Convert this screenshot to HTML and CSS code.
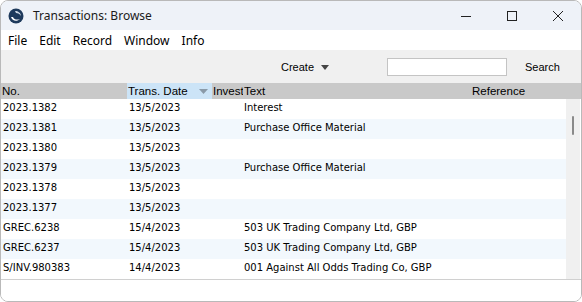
FILE: index.html
```html
<!DOCTYPE html>
<html>
<head>
<meta charset="utf-8">
<link rel="stylesheet" href="styles.css">
</head>
<body>
<div class="window">
  <div class="titlebar">
    <svg class="appicon" width="16" height="16" viewBox="0 0 16 16">
      <circle cx="8" cy="8" r="7.5" fill="#1e3a5c"/>
      <path d="M3 9 C4 13 9 14 12 11 C10 12 6 12 5 9 Z" fill="#fff"/>
      <path d="M7 3 C10 3 13 5 13 8 C12 6 10 5 8 5 Z" fill="#cfd9e4"/>
    </svg>
    <span class="title">Transactions: Browse</span>
    <div class="controls">
      <span class="ctl"><svg width="10" height="10" viewBox="0 0 10 10"><path d="M0 5.5h10" stroke="#222" stroke-width="1"/></svg></span>
      <span class="ctl"><svg width="10" height="10" viewBox="0 0 10 10"><rect x="0.5" y="0.5" width="9" height="9" fill="none" stroke="#222" stroke-width="1"/></svg></span>
      <span class="ctl"><svg width="10" height="10" viewBox="0 0 10 10"><path d="M0 0L10 10M10 0L0 10" stroke="#222" stroke-width="1"/></svg></span>
    </div>
  </div>
  <div class="menubar">
    <span>File</span><span>Edit</span><span>Record</span><span>Window</span><span>Info</span>
  </div>
  <div class="toolbar">
    <span class="create">Create <svg width="8" height="5" viewBox="0 0 8 5"><path d="M0 0h8L4 5z" fill="#444"/></svg></span>
    <input class="search" type="text">
    <span class="searchbtn">Search</span>
  </div>
  <div class="tablewrap">
    <div class="header">
      <span class="c1">No.</span>
      <span class="c2 sorted">Trans. Date<svg class="sortarrow" width="9" height="5" viewBox="0 0 9 5"><path d="M0 0h9L4.5 5z" fill="#8a9aa8"/></svg></span>
      <span class="c3">Invest</span>
      <span class="c4">Text</span>
      <span class="c5">Reference</span>
    </div>
    <div class="body">
      <div class="rows">
        <div class="row"><span class="c1">2023.1382</span><span class="c2">13/5/2023</span><span class="c3"></span><span class="c4">Interest</span></div>
        <div class="row"><span class="c1">2023.1381</span><span class="c2">13/5/2023</span><span class="c3"></span><span class="c4">Purchase Office Material</span></div>
        <div class="row"><span class="c1">2023.1380</span><span class="c2">13/5/2023</span><span class="c3"></span><span class="c4"></span></div>
        <div class="row"><span class="c1">2023.1379</span><span class="c2">13/5/2023</span><span class="c3"></span><span class="c4">Purchase Office Material</span></div>
        <div class="row"><span class="c1">2023.1378</span><span class="c2">13/5/2023</span><span class="c3"></span><span class="c4"></span></div>
        <div class="row"><span class="c1">2023.1377</span><span class="c2">13/5/2023</span><span class="c3"></span><span class="c4"></span></div>
        <div class="row"><span class="c1">GREC.6238</span><span class="c2">15/4/2023</span><span class="c3"></span><span class="c4">503 UK Trading Company Ltd, GBP</span></div>
        <div class="row"><span class="c1">GREC.6237</span><span class="c2">15/4/2023</span><span class="c3"></span><span class="c4">503 UK Trading Company Ltd, GBP</span></div>
        <div class="row"><span class="c1">S/INV.980383</span><span class="c2">14/4/2023</span><span class="c3"></span><span class="c4">001 Against All Odds Trading Co, GBP</span></div>
      </div>
      <div class="scrollbar"><div class="thumb"></div></div>
    </div>
  </div>
  <div class="footer"></div>
</div>
</body>
</html>
```
FILE: styles.css
```css
html, body {
  margin: 0;
  padding: 0;
  background: #ffffff;
}
.window {
  width: 582px;
  height: 302px;
  box-sizing: border-box;
  border: 1px solid #b9b9b9;
  border-radius: 8px;
  overflow: hidden;
  display: flex;
  flex-direction: column;
  background: #fff;
  font-family: "Noto Sans", sans-serif;
}
.titlebar {
  height: 29px;
  flex: none;
  background: #eef2f8;
  display: flex;
  align-items: center;
  padding-left: 7px;
}
.appicon { flex: none; }
.title {
  margin-left: 9px;
  font-size: 12px;
  color: #1a1a1a;
  font-family: "Noto Sans", sans-serif;
}
.controls {
  margin-left: auto;
  display: flex;
  height: 100%;
}
.ctl {
  width: 46px;
  display: flex;
  align-items: center;
  justify-content: center;
}
.menubar {
  height: 20px;
  flex: none;
  display: flex;
  align-items: center;
  padding-left: 7px;
  font-family: "Noto Sans", sans-serif;
  font-size: 12px;
  color: #000;
  background: #fff;
}
.menubar span { margin-right: 12px; }
.toolbar {
  height: 33px;
  flex: none;
  background: #f0f0f0;
  display: flex;
  align-items: center;
  font-family: "Liberation Sans", sans-serif;
  font-size: 11px;
  color: #000;
  padding-top: 1px;
  box-sizing: border-box;
}
.create {
  margin-left: 280px;
  width: 60px;
  display: flex;
  align-items: center;
  gap: 7px;
}
.search {
  margin-left: 46px;
  width: 120px;
  height: 18px;
  box-sizing: border-box;
  border: 1px solid #c4c4c4;
  background: #fff;
  padding: 0;
}
.searchbtn { margin-left: 18px; }
.tablewrap {
  flex: none;
  display: flex;
  flex-direction: column;
  font-family: "DejaVu Sans", sans-serif;
  font-size: 10px;
  color: #000;
  border-bottom: 1px solid #d0d0d0;
}
.header {
  height: 16px;
  background: #c9c9c9;
  display: flex;
  align-items: center;
  font-family: "Liberation Sans", sans-serif;
  font-size: 11.5px;
}
.header span { height: 100%; display: flex; align-items: center; box-sizing: border-box; }
.c1 { width: 126px; padding-left: 1px; flex: none; box-sizing: border-box; }
.c2 { width: 85px; padding-left: 1px; flex: none; box-sizing: border-box; }
.c3 { width: 31px; padding-left: 1px; flex: none; box-sizing: border-box; overflow: hidden; white-space: nowrap; }
.c4 { width: 228px; padding-left: 1px; flex: none; box-sizing: border-box; }
.c5 { flex: 1; padding-left: 1px; }
.sorted { background: #cce4f7; }
.sortarrow { margin-left: auto; margin-right: 4px; }
.body {
  display: flex;
  height: 180px;
}
.rows { flex: 1; }
.row {
  height: 20px;
  display: flex;
  align-items: center;
  white-space: nowrap;
  box-sizing: border-box;
  padding-bottom: 4px;
}
.row:nth-child(even) { background: #f2f8fd; }
.row .c1 { padding-left: 2px; }
.row .c2 { padding-left: 2px; }
.row .c4 { padding-left: 1px; }
.scrollbar {
  width: 14px;
  flex: none;
  background: #f0f0f0;
  margin-right: 1px;
  position: relative;
}
.thumb {
  position: absolute;
  left: 6px;
  top: 17px;
  width: 2px;
  height: 19px;
  background: #8a8a8a;
  border-radius: 1px;
}
.footer {
  flex: 1;
  background: #fff;
}
```
